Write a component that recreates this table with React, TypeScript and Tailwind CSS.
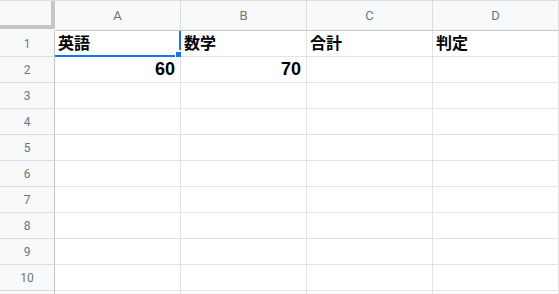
import React from 'react';

const columns = ['A', 'B', 'C', 'D'];

// sheet contents, keyed by row number
const data: Record<number, (string | number | null)[]> = {
  1: ['英語', '数学', '合計', '判定'],
  2: [60, 70, null, null],
};

const rows = Array.from({ length: 10 }, (_, i) => i + 1);

const font = { fontFamily: 'Roboto, "Liberation Sans", sans-serif' };
const cellFont = { fontFamily: '"Liberation Sans", "Noto Sans CJK JP", sans-serif' };

const App: React.FC = () => {
  return (
    <div className="w-[559px] h-[294px] overflow-hidden bg-white" style={font}>
      <div className="grid grid-cols-[55px_126px_126px_126px_126px]">
        {/* corner with the frozen-pane bars */}
        <div className="h-[31px] bg-[#f8f9fa] border-t border-[#dadce0] pb-[2px]">
          <div className="h-full border-b-4 border-r-4 border-[#c4c7c5]" />
        </div>
        {columns.map((col) => (
          <div
            key={col}
            className="h-[31px] flex items-center justify-center bg-[#f8f9fa] border-t border-r border-b border-t-[#dadce0] border-r-[#dadce0] border-b-[#c4c7c5] text-[13px] text-[#70757a]"
          >
            {col}
          </div>
        ))}

        {rows.map((r) => (
          <React.Fragment key={r}>
            <div className="h-[26px] flex items-center justify-center bg-[#f8f9fa] border-r border-b border-r-[#c4c7c5] border-b-[#dadce0] text-[12px] text-[#70757a]">
              {r}
            </div>
            {columns.map((col, ci) => {
              const value = data[r]?.[ci] ?? null;
              const isNum = typeof value === 'number';
              const selected = r === 1 && ci === 0;
              return (
                <div
                  key={col}
                  className={`relative h-[26px] flex items-center border-r border-b border-[#e2e3e3] font-bold text-black ${
                    isNum ? 'justify-end pr-[5px] text-[18px]' : 'justify-start pl-[3px] text-[16px]'
                  }`}
                  style={cellFont}
                >
                  {value}
                  {selected && (
                    <>
                      <div className="absolute left-0 right-[5px] bottom-[-1px] h-[2px] bg-[#1a73e8]" />
                      <div className="absolute top-0 right-[-1px] bottom-[6px] w-[2px] bg-[#1a73e8]" />
                      <div className="absolute right-[-2px] bottom-[-2px] w-[7px] h-[7px] bg-[#1a73e8] border border-white" />
                    </>
                  )}
                </div>
              );
            })}
          </React.Fragment>
        ))}

        {/* top sliver of the next row */}
        <div className="h-[4px] bg-[#f8f9fa] border-r border-r-[#c4c7c5]" />
        {columns.map((col) => (
          <div key={col} className="h-[4px] border-r border-[#e2e3e3]" />
        ))}
      </div>
    </div>
  );
};

export default App;
